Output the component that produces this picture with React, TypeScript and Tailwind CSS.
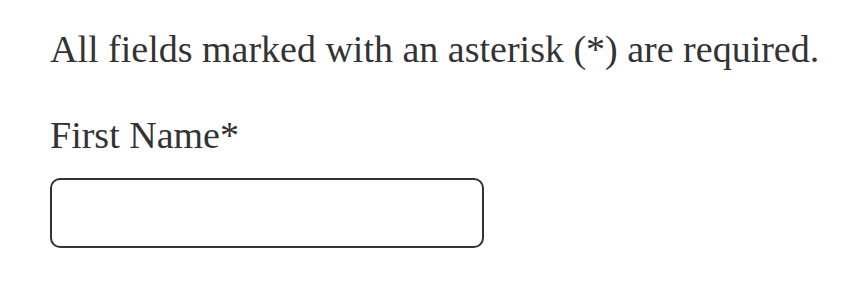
export default function App() {
  return (
    <div className="min-h-[285px] bg-white pl-[50px] pt-[27px] font-['Liberation_Serif',serif] text-[#333333]">
      <p className="text-[38px] leading-[44px]">
        All fields marked with an asterisk (*) are required.
      </p>
      <label htmlFor="first-name" className="mt-[42px] block text-[38px] leading-[44px]">
        First Name*
      </label>
      <input
        id="first-name"
        type="text"
        className="mt-[21px] block h-[70px] w-[434px] rounded-[10px] border-2 border-[#333333] bg-white px-3 text-[24px] outline-none"
      />
    </div>
  )
}
